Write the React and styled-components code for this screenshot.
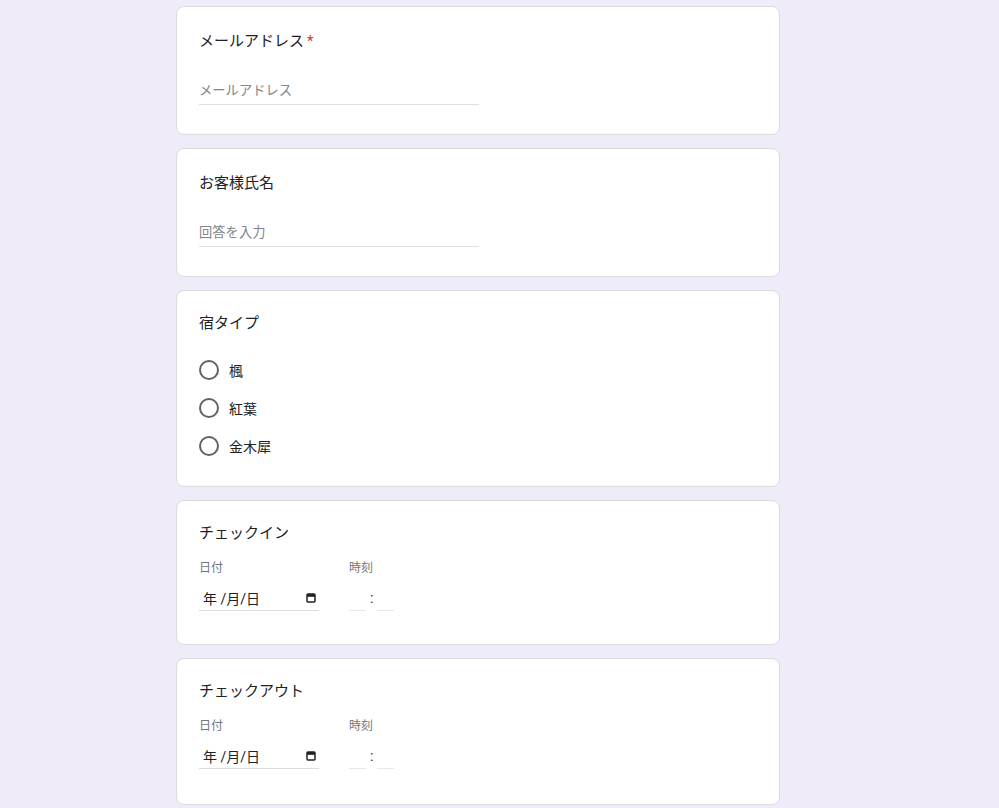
import React from "react";
import styled, { createGlobalStyle } from "styled-components";

const GlobalStyle = createGlobalStyle`
  html, body {
    margin: 0;
    padding: 0;
    background: #f0ebf8;
  }
  body {
    font-family: Roboto, "Noto Sans CJK JP", Arial, sans-serif;
    color: #202124;
  }
`;

const Page = styled.div`
  display: flex;
  flex-direction: column;
  gap: 13px;
  padding: 6px 0 20px 176px;
`;

const Card = styled.div`
  box-sizing: border-box;
  width: 604px;
  background: #fff;
  border: 1px solid #dadce0;
  border-radius: 8px;
  padding: ${(p) => p.pad || "22px 22px 29px"};
`;

const Title = styled.div`
  font-size: 15px;
  line-height: 24px;
  color: #202124;
`;

const Required = styled.span`
  color: #d93025;
  margin-left: 3px;
`;

const TextBox = styled.div`
  box-sizing: border-box;
  width: 280px;
  height: 30px;
  margin-top: 22px;
  border-bottom: 1px solid #e0e0e0;
  display: flex;
  align-items: center;
  font-size: 13.3px;
  color: #80868b;
`;

const RadioList = styled.div`
  display: flex;
  flex-direction: column;
  margin-top: 16px;
`;

const RadioRow = styled.label`
  display: flex;
  align-items: center;
  height: 38px;
  gap: 10px;
  font-size: 14px;
  color: #202124;
`;

const Circle = styled.span`
  box-sizing: border-box;
  width: 20px;
  height: 20px;
  border-radius: 50%;
  border: 2px solid #5f6368;
`;

const FieldRow = styled.div`
  display: flex;
  gap: 30px;
  margin-top: 14px;
`;

const Field = styled.div`
  display: flex;
  flex-direction: column;
`;

const Label = styled.div`
  font-size: 12px;
  line-height: 18px;
  color: #70757a;
`;

const DateBox = styled.div`
  box-sizing: border-box;
  width: 120px;
  height: 30px;
  margin-top: 4px;
  padding: 4px 3px 0 4px;
  border-bottom: 1px solid #dadce0;
  display: flex;
  align-items: center;
  justify-content: space-between;
  font-size: 14px;
  color: #202124;
`;

const TimeBox = styled.div`
  box-sizing: border-box;
  height: 30px;
  margin-top: 4px;
  padding-top: 4px;
  display: flex;
  align-items: center;
  gap: 4px;
  font-size: 14px;
  color: #202124;
`;

const TimeSlot = styled.span`
  box-sizing: border-box;
  width: 17px;
  align-self: stretch;
  margin-top: -4px;
  border-bottom: 1px solid #e8e8e8;
`;

const CalendarIcon = () => (
  <svg width="10" height="10" viewBox="0 0 10 10">
    <rect x="1" y="1" width="8" height="8" rx="1" fill="none" stroke="#202124" strokeWidth="1.5" />
    <rect x="1" y="1" width="8" height="2.8" fill="#202124" />
  </svg>
);

const DateTime = () => (
  <FieldRow>
    <Field>
      <Label>日付</Label>
      <DateBox>
        <span>年 /月/日</span>
        <CalendarIcon />
      </DateBox>
    </Field>
    <Field>
      <Label>時刻</Label>
      <TimeBox>
        <TimeSlot />
        <span>:</span>
        <TimeSlot />
      </TimeBox>
    </Field>
  </FieldRow>
);

const options = ["楓", "紅葉", "金木犀"];

export default function App() {
  return (
    <>
      <GlobalStyle />
      <Page>
        <Card>
          <Title>
            メールアドレス<Required>*</Required>
          </Title>
          <TextBox>メールアドレス</TextBox>
        </Card>
        <Card>
          <Title>お客様氏名</Title>
          <TextBox>回答を入力</TextBox>
        </Card>
        <Card pad="20px 22px 21px">
          <Title>宿タイプ</Title>
          <RadioList>
            {options.map((o) => (
              <RadioRow key={o}>
                <Circle />
                {o}
              </RadioRow>
            ))}
          </RadioList>
        </Card>
        <Card pad="20px 22px 33px">
          <Title>チェックイン</Title>
          <DateTime />
        </Card>
        <Card pad="20px 22px 35px">
          <Title>チェックアウト</Title>
          <DateTime />
        </Card>
      </Page>
    </>
  );
}
